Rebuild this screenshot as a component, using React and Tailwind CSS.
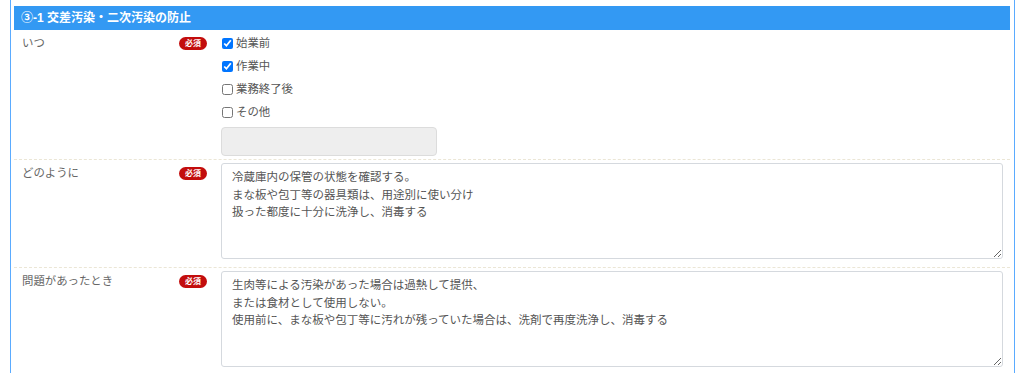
const fontStack = { fontFamily: '"Liberation Sans", "Noto Sans CJK JP", sans-serif' };

const Badge = () => (
  <span className="inline-flex items-center justify-center h-[13px] w-[28px] rounded-full bg-[#c30d0d] text-white text-[8px] font-bold leading-none">
    必須
  </span>
);

const Check = ({ label, checked }) => (
  <label className="flex items-center h-[23px] gap-[3px] text-[11.4px] text-[#555]">
    <input type="checkbox" defaultChecked={checked} className="m-0 ml-[1px] h-[11px] w-[11px] accent-[#0075ff]" />
    <span>{label}</span>
  </label>
);

const Row = ({ label, children, last }) => (
  <div className={"flex " + (last ? "" : "border-b border-dashed border-[#ebe6d6]")}>
    <div className="w-[200px] shrink-0 flex justify-between items-start pl-[8px] pr-[7px] pt-[7px]">
      <span className="text-[11.4px] text-[#666] leading-[13px]">{label}</span>
      <Badge />
    </div>
    <div className="flex-1 pl-[7px] pr-[7px] py-[3px]">{children}</div>
  </div>
);

const Area = ({ text }) => (
  <textarea
    defaultValue={text}
    className="block w-full h-[96px] border border-[#d5d9de] rounded-[3px] px-[10px] pt-[5px] text-[11.5px] leading-[17.5px] text-[#555] resize-y outline-none"
    style={fontStack}
  />
);

export default function App() {
  return (
    <div className="bg-white h-[373px] overflow-hidden" style={fontStack}>
      <div className="ml-[10px] mr-[9px] h-full border-x border-[#5aabff] pt-[6px] pl-[3px] pr-[4px]">
        <div className="h-[24px] bg-[#3399f3] flex items-center pl-[7px] text-white text-[12px] font-bold">
          ③-1 交差汚染・二次汚染の防止
        </div>
        <Row label="いつ">
          <div className="-mt-[1px]">
            <Check label="始業前" checked />
            <Check label="作業中" checked />
            <Check label="業務終了後" />
            <Check label="その他" />
            <input
              type="text"
              disabled
              className="mt-[3px] block w-[216px] h-[29px] bg-[#eeeeee] border border-[#dcdcdc] rounded-[4px]"
            />
          </div>
        </Row>
        <Row label="どのように">
          <Area text={"冷蔵庫内の保管の状態を確認する。\nまな板や包丁等の器具類は、用途別に使い分け\n扱った都度に十分に洗浄し、消毒する"} />
          <div className="h-[5px]" />
        </Row>
        <Row label="問題があったとき" last>
          <Area text={"生肉等による汚染があった場合は過熱して提供、\nまたは食材として使用しない。\n使用前に、まな板や包丁等に汚れが残っていた場合は、洗剤で再度洗浄し、消毒する"} />
        </Row>
      </div>
    </div>
  );
}
